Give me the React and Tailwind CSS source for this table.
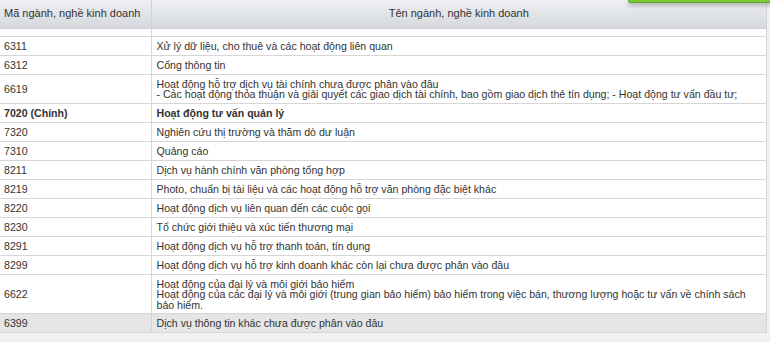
import React from 'react';

const rows = [
  { code: '6311', name: ['Xử lý dữ liệu, cho thuê và các hoạt động liên quan'] },
  { code: '6312', name: ['Cổng thông tin'] },
  {
    code: '6619',
    name: [
      'Hoạt động hỗ trợ dịch vụ tài chính chưa được phân vào đâu',
      '- Các hoạt động thỏa thuận và giải quyết các giao dịch tài chính, bao gồm giao dịch thẻ tín dụng; - Hoạt động tư vấn đầu tư;',
    ],
  },
  { code: '7020 (Chính)', name: ['Hoạt động tư vấn quản lý'], bold: true },
  { code: '7320', name: ['Nghiên cứu thị trường và thăm dò dư luận'] },
  { code: '7310', name: ['Quảng cáo'] },
  { code: '8211', name: ['Dịch vụ hành chính văn phòng tổng hợp'] },
  { code: '8219', name: ['Photo, chuẩn bị tài liệu và các hoạt động hỗ trợ văn phòng đặc biệt khác'] },
  { code: '8220', name: ['Hoạt động dịch vụ liên quan đến các cuộc gọi'] },
  { code: '8230', name: ['Tổ chức giới thiệu và xúc tiến thương mại'] },
  { code: '8291', name: ['Hoạt động dịch vụ hỗ trợ thanh toán, tín dụng'] },
  { code: '8299', name: ['Hoạt động dịch vụ hỗ trợ kinh doanh khác còn lại chưa được phân vào đâu'] },
  {
    code: '6622',
    name: [
      'Hoạt động của đại lý và môi giới bảo hiểm',
      'Hoạt động của các đại lý và môi giới (trung gian bảo hiểm) bảo hiểm trong việc bán, thương lượng hoặc tư vấn về chính sách bảo hiểm.',
    ],
  },
  { code: '6399', name: ['Dịch vụ thông tin khác chưa được phân vào đâu'], hover: true },
];

const IndustryTable = () => {
  return (
    <table className="w-[767px] border-collapse table-fixed border-r border-[#d3d3d3] bg-white">
      <colgroup>
        <col className="w-[151px]" />
        <col />
      </colgroup>
      <thead>
        <tr className="h-[28px] bg-gradient-to-b from-[#eef0f3] to-[#d5d8dc]">
          <th className="border-r border-b border-[#cfd2d6] px-[4px] text-left font-normal text-[11px] leading-[13px] whitespace-nowrap">
            Mã ngành, nghề kinh doanh
          </th>
          <th className="border-b border-[#cfd2d6] px-[4px] text-center font-normal text-[11px] leading-[13px]">
            Tên ngành, nghề kinh doanh
          </th>
        </tr>
      </thead>
      <tbody>
        <tr className="h-[8px]">
          <td className="border-r border-b border-[#d6d6d6]" />
          <td className="border-b border-[#d6d6d6]" />
        </tr>
        {rows.map(row => (
          <tr
            key={row.code}
            className={`${row.hover ? 'bg-[#e5e5e5]' : 'bg-white'} ${row.bold ? 'font-bold' : ''}`}
          >
            <td className="border-r border-b border-[#d6d6d6] px-[4px] pt-[4px] pb-[3px] align-middle leading-[11px]">
              {row.code}
            </td>
            <td
              className={`border-b border-[#d6d6d6] px-[5px] pt-[4px] pb-[3px] ${
                row.name.length > 1 ? 'leading-[10.5px]' : 'leading-[11px]'
              }`}
            >
              {row.name.map((line, i) => (
                <div key={i}>{line}</div>
              ))}
            </td>
          </tr>
        ))}
      </tbody>
    </table>
  );
};

export default function App() {
  return (
    <div className="relative w-[770px] h-[342px] overflow-hidden bg-[#f1f1f1] text-[10.6px] text-[#333] font-['Liberation_Sans',Arial,sans-serif]">
      <IndustryTable />
      <div className="absolute top-0 left-[628px] w-[160px] h-[3px] bg-[#7fc835] border-b border-l border-[#5fa522] rounded-bl-[3px] shadow-[0_2px_4px_rgba(0,0,0,0.35)]" />
    </div>
  );
}
